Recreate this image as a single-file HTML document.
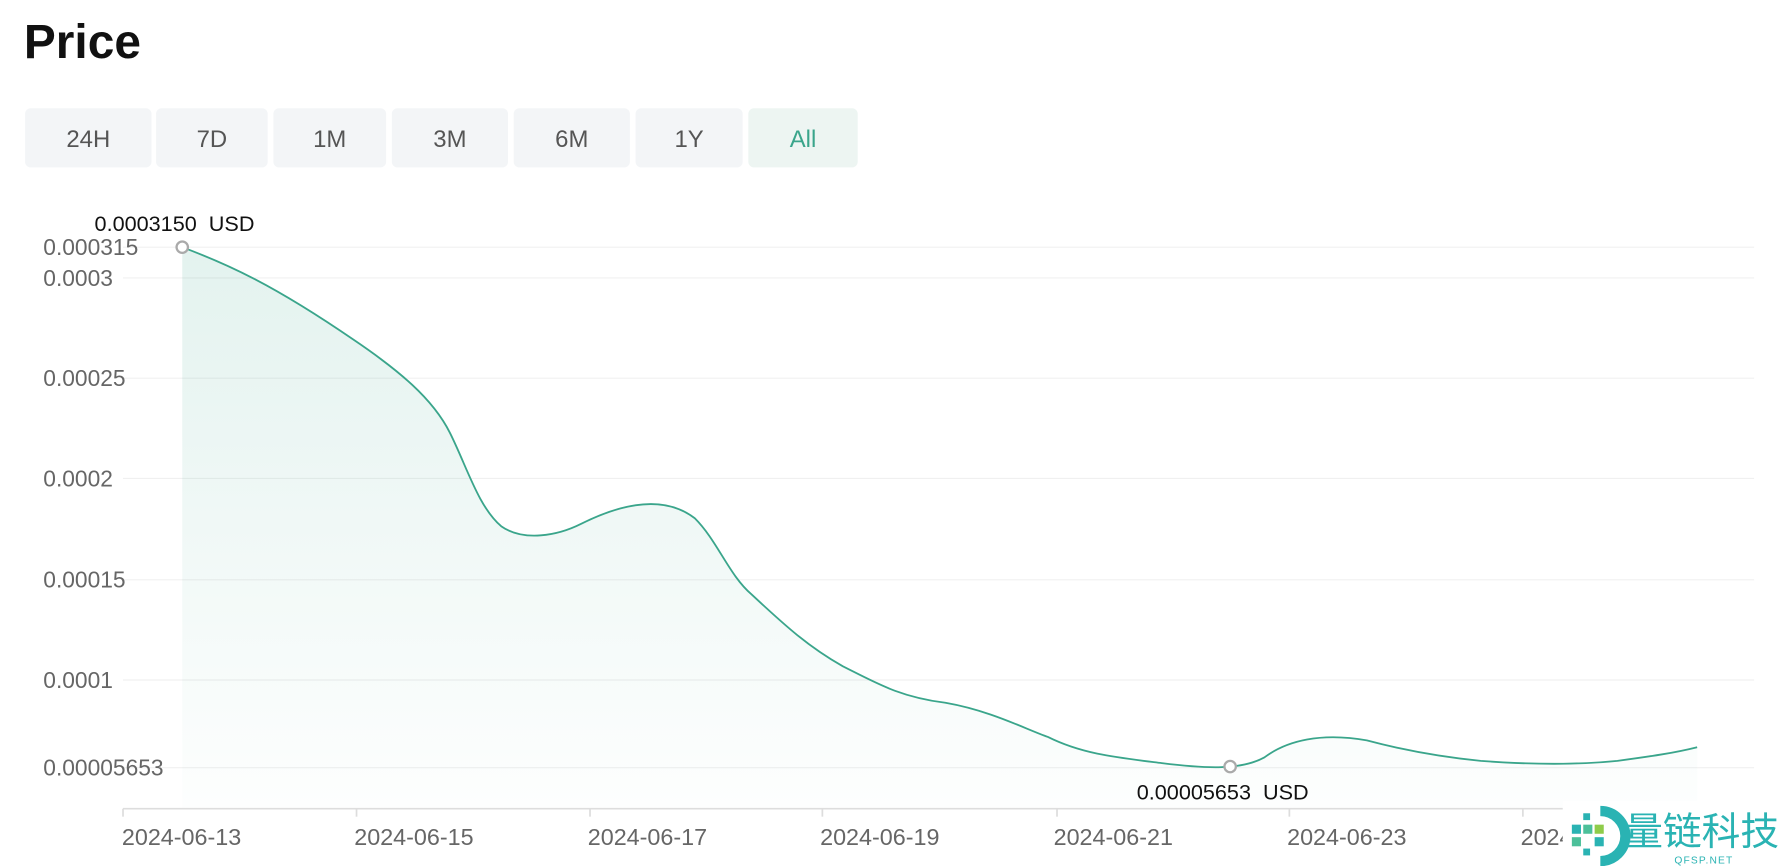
<!DOCTYPE html>
<html><head><meta charset="utf-8"><style>
html,body{margin:0;padding:0;background:#fff;width:1786px;height:866px;overflow:hidden}
svg{display:block}
text{font-family:"Liberation Sans","Noto Sans CJK SC",sans-serif}
</style></head><body>
<svg width="1786" height="866" viewBox="0 0 1568 760.3" xmlns="http://www.w3.org/2000/svg">
<defs>
<linearGradient id="g" x1="0" y1="0" x2="0" y2="1">
<stop offset="0" stop-color="#3aa58b" stop-opacity="0.14"/>
<stop offset="1" stop-color="#3aa58b" stop-opacity="0.01"/>
</linearGradient>
</defs>
<text x="21" y="51" font-size="42" font-weight="bold" fill="#111">Price</text>
<g font-size="21" fill="#555" text-anchor="middle">
<rect x="22" y="95" width="111" height="52" rx="5" fill="#f3f5f7"/><text x="77.5" y="129">24H</text>
<rect x="137" y="95" width="98" height="52" rx="5" fill="#f3f5f7"/><text x="186" y="129">7D</text>
<rect x="240" y="95" width="99" height="52" rx="5" fill="#f3f5f7"/><text x="289.5" y="129">1M</text>
<rect x="344" y="95" width="102" height="52" rx="5" fill="#f3f5f7"/><text x="395" y="129">3M</text>
<rect x="451" y="95" width="102" height="52" rx="5" fill="#f3f5f7"/><text x="502" y="129">6M</text>
<rect x="558" y="95" width="94" height="52" rx="5" fill="#f3f5f7"/><text x="605" y="129">1Y</text>
<rect x="657" y="95" width="96" height="52" rx="5" fill="#edf5f2"/><text x="705" y="129" fill="#3aa58b">All</text>
</g>
<g stroke="#f0f0f0" stroke-width="1">
<line x1="108" y1="217" x2="1540" y2="217"/>
<line x1="108" y1="244" x2="1540" y2="244"/>
<line x1="108" y1="332" x2="1540" y2="332"/>
<line x1="108" y1="420" x2="1540" y2="420"/>
<line x1="108" y1="509" x2="1540" y2="509"/>
<line x1="108" y1="597" x2="1540" y2="597"/>
<line x1="108" y1="674" x2="1540" y2="674"/>
</g>
<g font-size="20" fill="#666">
<text x="38" y="224">0.000315</text>
<text x="38" y="251">0.0003</text>
<text x="38" y="339">0.00025</text>
<text x="38" y="427">0.0002</text>
<text x="38" y="516">0.00015</text>
<text x="38" y="604">0.0001</text>
<text x="38" y="681">0.00005653</text>
</g>
<line x1="108" y1="710" x2="1540" y2="710" stroke="#ddd" stroke-width="1.5"/>
<g stroke="#ddd" stroke-width="1.5">
<line x1="108" y1="710" x2="108" y2="717"/><line x1="313" y1="710" x2="313" y2="717"/><line x1="518" y1="710" x2="518" y2="717"/><line x1="722" y1="710" x2="722" y2="717"/><line x1="928" y1="710" x2="928" y2="717"/><line x1="1132" y1="710" x2="1132" y2="717"/><line x1="1337" y1="710" x2="1337" y2="717"/>
</g>
<g font-size="20.5" fill="#666">
<text x="107" y="742">2024-06-13</text><text x="311" y="742">2024-06-15</text><text x="516" y="742">2024-06-17</text><text x="720" y="742">2024-06-19</text><text x="925" y="742">2024-06-21</text><text x="1130" y="742">2024-06-23</text><text x="1335" y="742">2024-06-25</text>
</g>
<path d="M160,217 C200,232 240,250 310,298 C350,325 380,350 395,380 C410,410 420,445 440,462 C460,476 490,470 510,460 C540,445 580,432 610,455 C630,475 640,505 660,522 C690,550 710,568 740,585 C770,600 790,612 830,617 C870,624 900,640 920,647 C950,662 980,665 1020,670 C1060,675 1090,676 1110,665 C1130,650 1160,643 1200,650 C1230,658 1260,664 1300,668 C1340,671 1380,672 1420,668 C1450,664 1470,661 1490,656 L1490,709 L160,709 Z" fill="url(#g)"/>
<path d="M160,217 C200,232 240,250 310,298 C350,325 380,350 395,380 C410,410 420,445 440,462 C460,476 490,470 510,460 C540,445 580,432 610,455 C630,475 640,505 660,522 C690,550 710,568 740,585 C770,600 790,612 830,617 C870,624 900,640 920,647 C950,662 980,665 1020,670 C1060,675 1090,676 1110,665 C1130,650 1160,643 1200,650 C1230,658 1260,664 1300,668 C1340,671 1380,672 1420,668 C1450,664 1470,661 1490,656" fill="none" stroke="#3aa58b" stroke-width="1.6"/>
<circle cx="160" cy="217" r="5" fill="#fff" stroke="#aaa" stroke-width="2"/>
<circle cx="1080" cy="673" r="5" fill="#fff" stroke="#aaa" stroke-width="2"/>
<text x="83" y="203" font-size="19" fill="#111" xml:space="preserve">0.0003150  USD</text>
<text x="998" y="702" font-size="19" fill="#111" xml:space="preserve">0.00005653  USD</text>
<rect x="1372" y="703" width="196" height="58" fill="#fff"/>
<g>
<path d="M1405,712 A22,22 0 1 1 1405,756" fill="none" stroke="#2ab3b3" stroke-width="9"/>
<rect x="1380" y="724" width="8" height="8" fill="#2ab3b3"/><rect x="1390" y="724" width="8" height="8" fill="#4cc09a"/><rect x="1400" y="724" width="8" height="8" fill="#8fcc4a"/>
<rect x="1390" y="714" width="6" height="6" fill="#2ab3b3"/><rect x="1380" y="735" width="8" height="8" fill="#4cc09a"/><rect x="1400" y="735" width="8" height="8" fill="#2ab3b3"/><rect x="1390" y="745" width="6" height="6" fill="#2ab3b3"/>
</g>
<text x="1426" y="742" font-size="34" fill="#2ab3b3" font-family="Noto Sans CJK SC, sans-serif">量链科技</text>
<text x="1470" y="758" font-size="9" fill="#2ab3b3" letter-spacing="1">QFSP.NET</text>
</svg>
</body></html>
